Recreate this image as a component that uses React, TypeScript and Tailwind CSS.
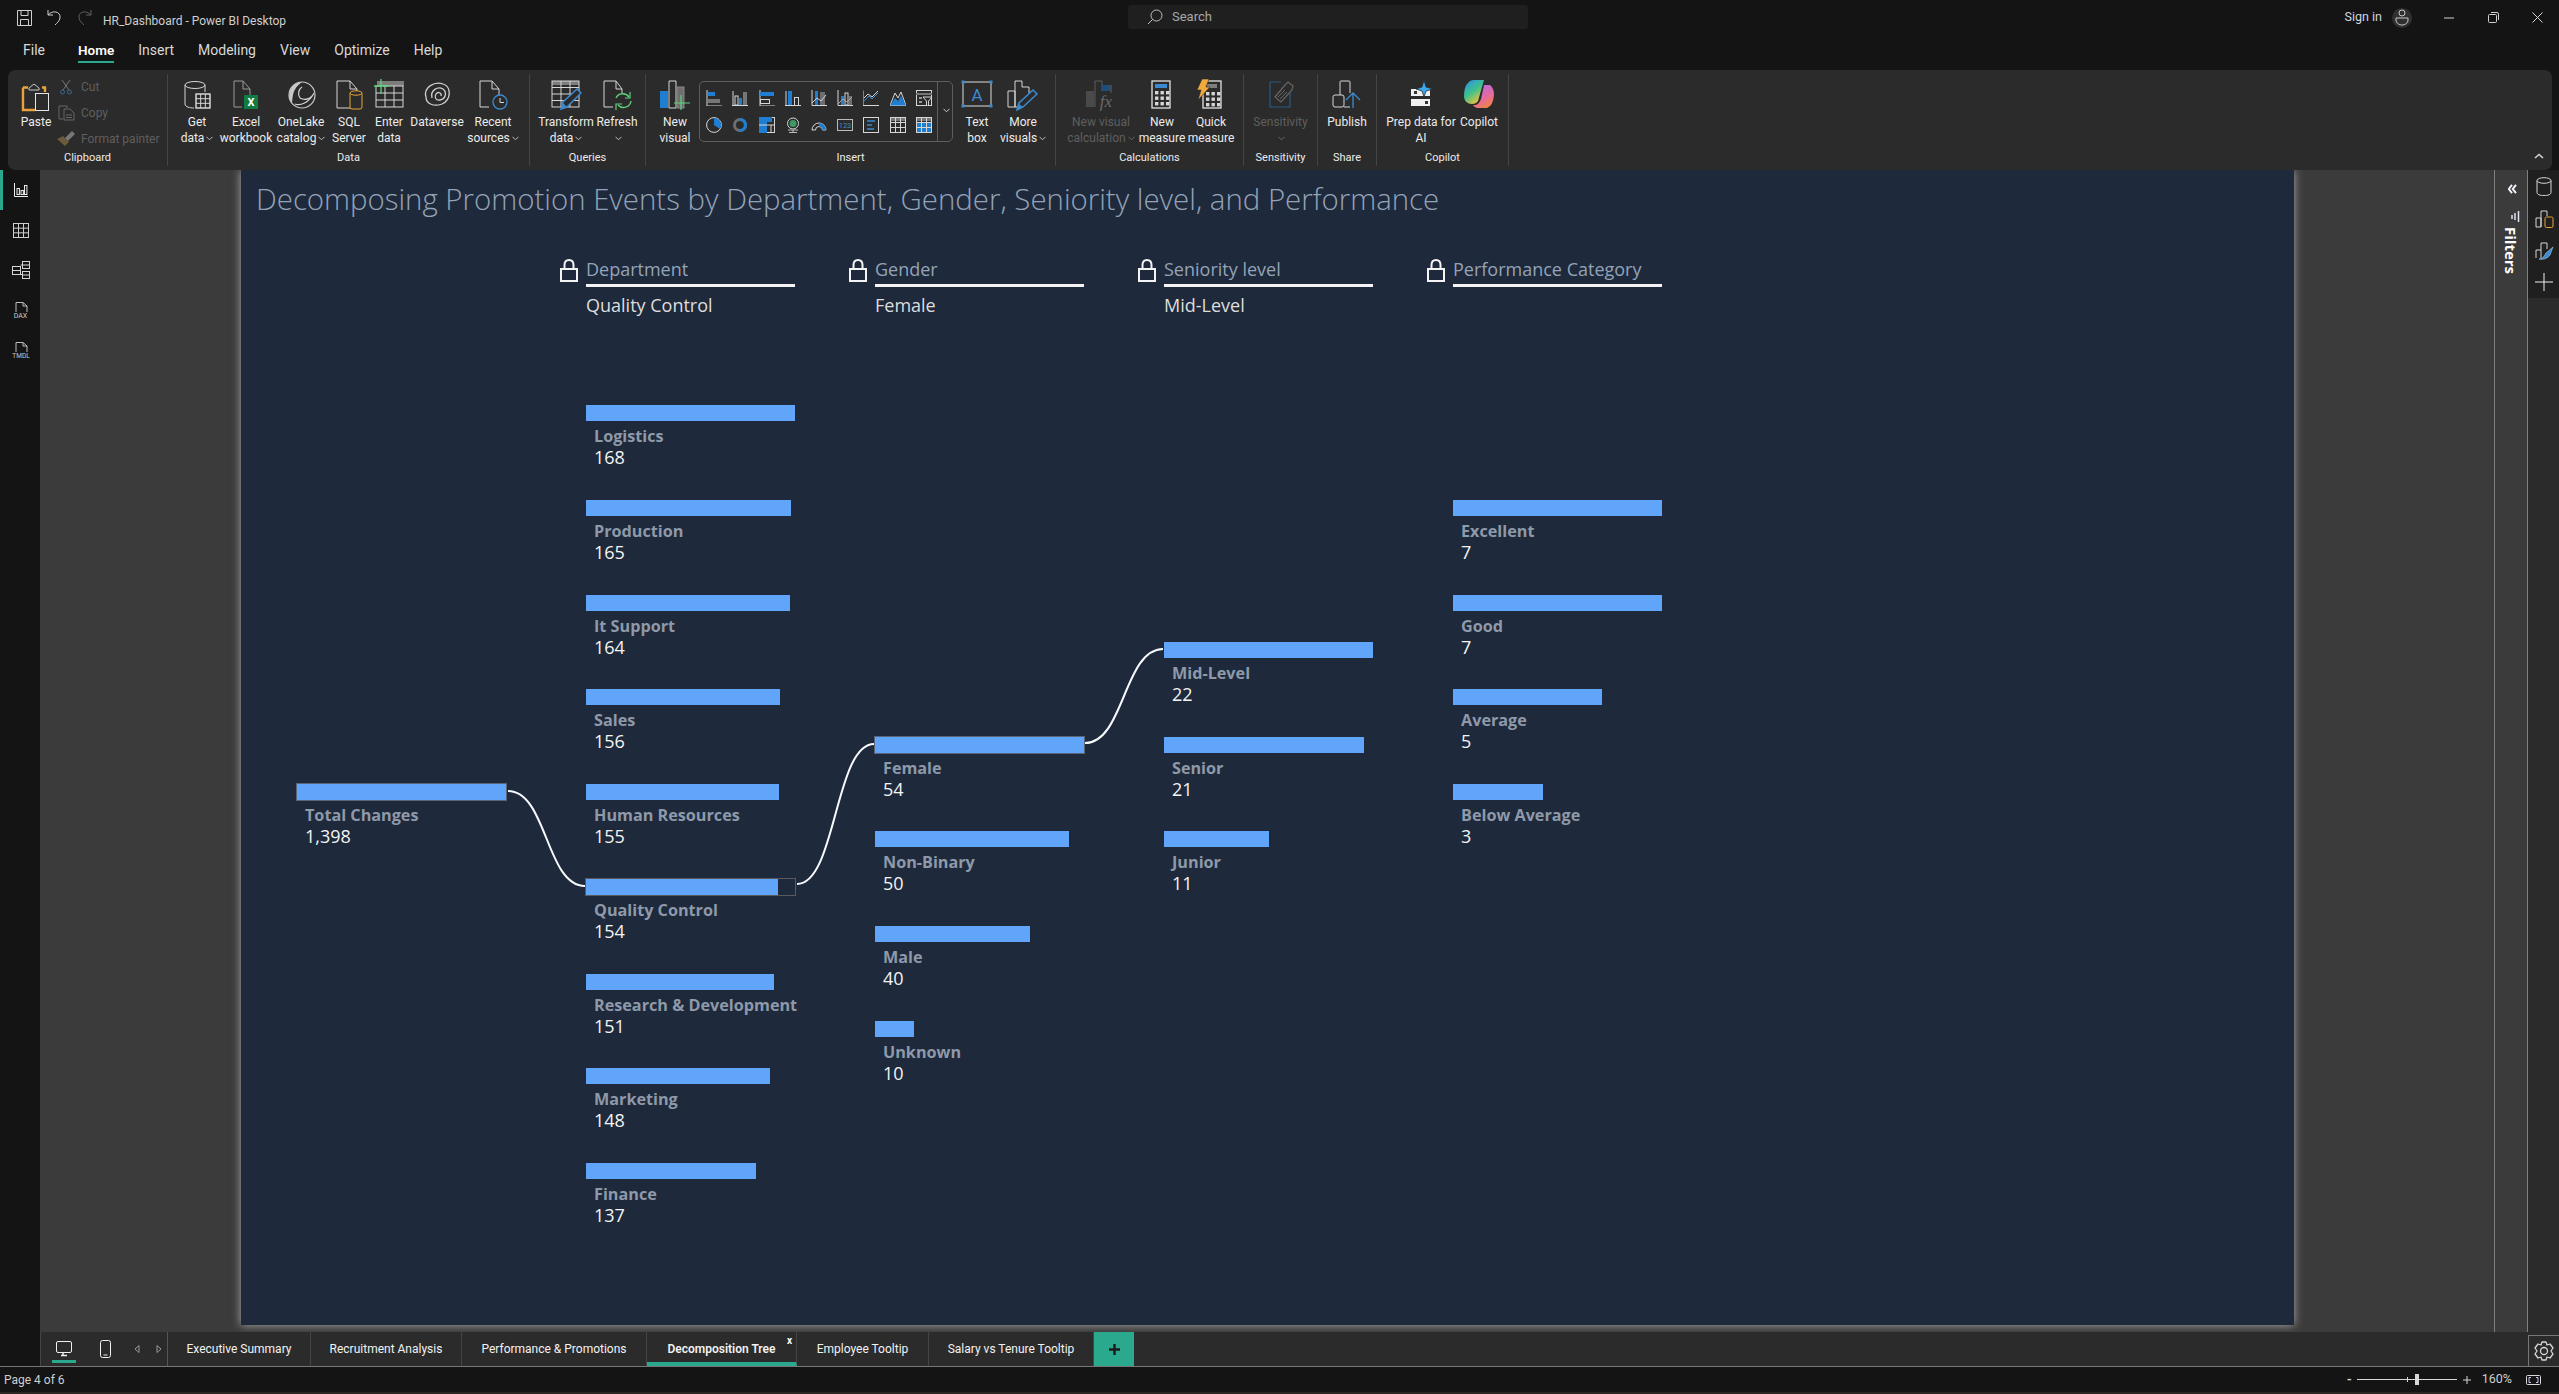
import React from 'react';

const S = '#d6d6d6';
const B = '#3b8ad0';
const DIS = '#5c5c5c';

function Ic({ w = 32, h = 32, vb, children, className = '' }: { w?: number; h?: number; vb?: string; children: React.ReactNode; className?: string }) {
  return (
    <svg width={w} height={h} viewBox={vb ?? `0 0 ${w} ${h}`} fill="none" stroke={S} strokeWidth={1} className={`block shrink-0 ${className}`}>
      {children}
    </svg>
  );
}

const Chevron = ({ c = '#bdbdbd' }: { c?: string }) => (
  <svg width="7" height="5" viewBox="0 0 7 5" fill="none" stroke={c} strokeWidth="1" className="inline-block ml-[2px] mb-[1px]">
    <path d="M0.5 0.8 L3.5 3.8 L6.5 0.8" />
  </svg>
);

const Doc = ({ x = 8, y = 2, w = 18, h = 26, c = S }: { x?: number; y?: number; w?: number; h?: number; c?: string }) => (
  <path d={`M${x + w} ${y + h} H${x} V${y} H${x + w - 7} L${x + w} ${y + 8} V${y + h} M${x + w - 7} ${y} V${y + 8} H${x + w}`} stroke={c} />
);

const GridLines = ({ x, y, w, h, cols, rows, c = S }: { x: number; y: number; w: number; h: number; cols: number; rows: number; c?: string }) => (
  <g stroke={c}>
    <rect x={x} y={y} width={w} height={h} />
    {Array.from({ length: cols - 1 }, (_, i) => (
      <path key={i} d={`M${x + ((i + 1) * w) / cols} ${y} V${y + h}`} />
    ))}
    {Array.from({ length: rows - 1 }, (_, i) => (
      <path key={i} d={`M${x} ${y + ((i + 1) * h) / rows} H${x + w}`} />
    ))}
  </g>
);

const PasteIcon = () => (
  <Ic w={30} h={32}>
    <path d="M2 6.5 V29 H14" stroke="#e8a33d" strokeWidth="2.4" />
    <path d="M2 6.5 H7 M21 6.5 H24 V11" stroke="#e8a33d" strokeWidth="2.4" />
    <path d="M8 7 L13 3 L18 7 V9 H8 Z" stroke="#c9c9c9" />
    <rect x="14.5" y="12.5" width="13" height="17" fill="#2b2b2b" stroke="#e6e6e6" />
  </Ic>
);
const GetDataIcon = () => (
  <Ic>
    <ellipse cx="14" cy="6" rx="10" ry="3.5" />
    <path d="M4 6 V25 C4 28 9 29 13 29 M24 6 V13" />
    <rect x="15" y="15" width="14" height="14" fill="#2b2b2b" />
    <GridLines x={15} y={15} w={14} h={14} cols={3} rows={3} />
  </Ic>
);
const ExcelIcon = () => (
  <Ic>
    <path d="M20 21 V10 L13 2 H4 V28 H12 M13 2 V10 H20" stroke="#9a9a9a" />
    <rect x="14" y="16" width="14" height="14" fill="#107c41" stroke="none" />
    <text x="21" y="27" fontSize="11" fontWeight="700" fill="#fff" stroke="none" textAnchor="middle" fontFamily="Roboto, sans-serif">X</text>
  </Ic>
);
const OneLakeIcon = () => (
  <Ic>
    <circle cx="17" cy="16" r="13" fill="#2b2b2b" stroke="#c8c8c8" strokeWidth="1.2" />
    <path d="M17 3 A13 13 0 0 0 7 24 C8 17 7 10 17 3 Z" fill="#c8c8c8" stroke="none" />
    <path d="M10 25 C15 27 24 24 29 14 C26 20 20 22 15 19 C12 15 14 10 17 8" stroke="#d2d2d2" strokeWidth="1.2" />
  </Ic>
);
const SqlIcon = () => (
  <Ic>
    <Doc x={4} y={2} w={20} h={27} />
    <rect x="17" y="13" width="12" height="17" rx="2" fill="#2b2b2b" stroke="#e8a33d" />
    <ellipse cx="23" cy="14" rx="6" ry="2.2" fill="#2b2b2b" stroke="#e8a33d" />
  </Ic>
);
const EnterIcon = () => (
  <Ic>
    <rect x="4" y="2" width="27" height="5" fill="#7d7d7d" stroke="none" />
    <GridLines x={3} y={7} w={27} h={21} cols={3} rows={3} />
    <path d="M1 7 H16 M8 0 V15" stroke="#5fd17a" strokeWidth="1.3" />
  </Ic>
);
const DataverseIcon = () => (
  <Ic>
    <path d="M5 18 C2 8 14 2 22 5 C31 8 30 21 21 25 C13 28 5 25 5 18 Z" stroke="#cfcfcf" strokeWidth="1.3" />
    <path d="M11 19 C9 11 17 7 22 10 C26 13 25 20 19 21 C15 22 13 18 15 15 C17 12 21 14 20 17" stroke="#cfcfcf" strokeWidth="1.3" />
  </Ic>
);
const RecentIcon = () => (
  <Ic>
    <path d="M12 28 H3 V2 H15 L22 10 V17 M15 2 V10 H22" />
    <circle cx="23" cy="23" r="7" fill="#2b2b2b" stroke={B} strokeWidth="1.3" />
    <path d="M23 19 V23.5 H27" stroke="#d6d6d6" />
  </Ic>
);
const TransformIcon = () => (
  <Ic>
    <rect x="2" y="2" width="27" height="4" fill="#7d7d7d" stroke="none" />
    <GridLines x={2} y={2} w={27} h={26} cols={3} rows={4} />
    <path d="M11 30 L13 23 L27 10 L31 14 L17 28 Z" fill="#2b2b2b" stroke={B} strokeWidth="1.5" />
    <path d="M11 30 L13 24 L17 28 Z" fill={B} stroke="none" />
  </Ic>
);
const RefreshIcon = () => (
  <Ic>
    <path d="M12 28 H3 V2 H15 L21 10 V14 M15 2 V10 H21" />
    <path d="M15 19 A7.5 7.5 0 0 1 28 18 M30 22 A7.5 7.5 0 0 1 17 26" stroke="#5fd17a" strokeWidth="1.4" />
    <path d="M29 13 V19 H24 M15 31 V25 H21" stroke="#5fd17a" strokeWidth="1.2" />
  </Ic>
);
const NewVisualIcon = () => (
  <Ic>
    <rect x="1" y="12" width="8" height="17" fill="#1f7ed0" stroke="none" />
    <path d="M10 29 V2 H17 V29 M10 29 H17" />
    <rect x="18" y="8" width="7" height="21" fill="#6e6e6e" stroke="#888" />
    <path d="M15 24 H31 M22 16 V31" stroke="#5fd17a" strokeWidth="1.2" />
  </Ic>
);
const TextBoxIcon = () => (
  <Ic>
    <rect x="2" y="3" width="28" height="24" stroke="#dcdcdc" />
    {[[2, 3], [30, 3], [2, 27], [30, 27]].map(([x, y], i) => (
      <rect key={i} x={x - 1.5} y={y - 1.5} width="3" height="3" fill={B} stroke="none" />
    ))}
    <text x="16" y="22" textAnchor="middle" fontSize="17" fill={B} stroke="none" fontFamily="Roboto, sans-serif">A</text>
  </Ic>
);
const MoreVisualsIcon = () => (
  <Ic>
    <path d="M1 28 V12 H8 V28 Z M8 28 V2 H15 V8 H22 V14 M8 28 H14" />
    <path d="M10 31 L12 24 L26 11 L30 15 L16 28 Z" fill="#2b2b2b" stroke={B} strokeWidth="1.5" />
    <path d="M10 31 L12 25 L16 28 Z" fill={B} stroke="none" />
  </Ic>
);
const FxIcon = () => (
  <Ic>
    <rect x="1" y="12" width="8" height="16" fill="#4a4a4a" stroke="none" />
    <path d="M10 28 V2 H17 V12" stroke={DIS} />
    <rect x="17" y="6" width="9" height="6" fill="#1e4d78" stroke="none" />
    <path d="M26 6 V14" stroke={DIS} />
    <text x="21" y="28" textAnchor="middle" fontSize="17" fontStyle="italic" fontFamily="Liberation Serif, serif" fill="#6a6a6a" stroke="none">fx</text>
  </Ic>
);
const CalcKeys = ({ x, y, c = '#d6d6d6' }: { x: number; y: number; c?: string }) => (
  <g fill={c} stroke="none">
    {[0, 1, 2].map((r) => [0, 1, 2].map((k) => <rect key={`${r}${k}`} x={x + k * 5.5} y={y + r * 5.5} width="3.4" height="3.4" />))}
  </g>
);
const MeasureIcon = () => (
  <Ic>
    <rect x="6" y="2" width="18" height="27" stroke="#e2e2e2" strokeWidth="1.3" />
    <rect x="9" y="5" width="12" height="4" fill={B} stroke="none" />
    <CalcKeys x={9} y={12} />
  </Ic>
);
const QuickIcon = () => (
  <Ic>
    <rect x="8" y="2" width="18" height="27" stroke="#e2e2e2" strokeWidth="1.3" />
    <rect x="12" y="5" width="10" height="4" fill="#7d7d7d" stroke="none" />
    <CalcKeys x={11} y={13} />
    <path d="M7 0 H14 L11 8 H15 L3 21 L6 11 H2 Z" fill="#f2a93b" stroke="#2b2b2b" strokeWidth="0.6" />
  </Ic>
);
const SensitivityIcon = () => (
  <Ic>
    <path d="M5 3 H16 M25 14 V28 H5 V3" stroke="#2a5a82" strokeWidth="1.2" />
    <path d="M10 18 L20 6 L23 3 L28 7 L27 11 L16 23 Z" fill="#2b2b2b" stroke="#666" strokeWidth="1.2" />
    <path d="M13 18 L20 11 M15 20 L22 13" stroke="#666" />
  </Ic>
);
const PublishIcon = () => (
  <Ic>
    <rect x="2" y="16" width="11" height="12" rx="2" />
    <path d="M9 16 V3 Q9 2 10 2 H18 Q19 2 19 3 V14 M13 28 H19" />
    <path d="M22 29 V14 M15 21 L22 14 L29 21" stroke={B} strokeWidth="1.3" />
  </Ic>
);
const PrepIcon = () => (
  <Ic w={26} h={32} vb="0 0 26 32">
    <rect x="3" y="10" width="19" height="7" fill="#f0f0f0" stroke="none" />
    <rect x="6" y="12" width="3" height="3" fill="#333" stroke="none" />
    <rect x="3" y="20" width="19" height="7" fill="#f0f0f0" stroke="none" />
    <rect x="17" y="22" width="3" height="3" fill="#333" stroke="none" />
    <path d="M16 1 L18 8 L25 10 L18 12 L16 18 L14 12 L8 10 L14 8 Z" fill="#3aa8f0" stroke="#2b2b2b" strokeWidth="0.8" />
  </Ic>
);
const CopilotIcon = () => (
  <Ic>
    <defs>
      <linearGradient id="cpA" x1="0" y1="0" x2="0.6" y2="1">
        <stop offset="0" stopColor="#2c8cf0" />
        <stop offset="0.55" stopColor="#3fc28a" />
        <stop offset="1" stopColor="#f2c23c" />
      </linearGradient>
      <linearGradient id="cpB" x1="0.2" y1="0" x2="0.7" y2="1">
        <stop offset="0" stopColor="#b06ce8" />
        <stop offset="0.6" stopColor="#e86a9a" />
        <stop offset="1" stopColor="#f0853a" />
      </linearGradient>
    </defs>
    <path d="M11 1 H21 L15 22 Q13 25 9 25 Q2 25 1 18 Q1 7 5 4 Q7 1 11 1 Z" fill="url(#cpA)" stroke="none" />
    <path d="M21 6 H27 Q31 9 31 16 Q30 27 24 29 H14 Q11 28 10 26 H13 Q16 25 18 20 Z" fill="url(#cpB)" stroke="none" />
  </Ic>
);

/* gallery icons */
const G = ({ children }: { children: React.ReactNode }) => <Ic w={16} h={16}>{children}</Ic>;
const gallery: React.ReactNode[] = [
  <G><path d="M1 0 V16 H16" /><rect x="2" y="2" width="7" height="4" fill="#1f7ed0" stroke="none" /><rect x="2" y="9" width="12" height="4" fill="#777" stroke="none" /></G>,
  <G><path d="M0 15.5 H16 M1 1 V15" /><rect x="3" y="6" width="3" height="9" stroke="#d6d6d6" /><rect x="7" y="8" width="3" height="7" fill="#1f7ed0" stroke="none" /><rect x="11" y="2" width="4" height="13" fill="#777" stroke="none" /></G>,
  <G><path d="M1 0 V16 H16" /><rect x="1" y="2" width="14" height="4" fill="#1f7ed0" stroke="none" /><rect x="1.5" y="9.5" width="9" height="4" /></G>,
  <G><path d="M0 15.5 H16 M1 1 V15" /><rect x="3" y="1" width="4" height="14" fill="#1f7ed0" stroke="none" /><rect x="9.5" y="7.5" width="4" height="8" /></G>,
  <G><path d="M1 0 V15.5 H16" /><rect x="4" y="1" width="3" height="14" fill="#1f7ed0" stroke="none" /><rect x="9" y="2" width="5" height="13" fill="#6e6e6e" stroke="none" /><path d="M1 13 L6 8 L10 11 L15 5" /></G>,
  <G><path d="M1 0 V15.5 H16" /><rect x="4" y="6" width="3" height="9" fill="#1f7ed0" stroke="none" /><rect x="8" y="3" width="3" height="12" stroke="#d6d6d6" /><rect x="12" y="6" width="3" height="9" fill="#6e6e6e" stroke="none" /><path d="M1 14 L6 9 L10 12 L15 7" stroke="#aaa" /></G>,
  <G><path d="M0 0.5 V15.5 H16" /><path d="M1 11 L6 6 L9 9 L15 3" stroke={B} /><path d="M1 8 L5 4 L9 7 L15 1" /></G>,
  <G><path d="M0 15.5 L5 3 L8 8 L11 2 L16 15.5 Z" /><path d="M0 15.5 L5 8 L8 11 L11 6 L16 15.5 Z" fill="#1f7ed0" stroke="none" /></G>,
  <G><rect x="0.5" y="0.5" width="15" height="15" /><path d="M0 4 H16" strokeWidth="2" stroke="#777" /><rect x="3" y="7" width="3" height="2" fill="#999" stroke="none" /><rect x="3" y="11" width="3" height="2" fill="#999" stroke="none" /><path d="M7 7 H16 L12.5 11 V16 H10.5 V11 Z" fill="#2b2b2b" /></G>,
  <G><circle cx="8" cy="8" r="7.4" /><path d="M8 1 A7 7 0 0 1 14 12 L8 8 Z" fill="#1f7ed0" stroke="none" /></G>,
  <G><circle cx="8" cy="8" r="5.5" stroke="#6e6e6e" strokeWidth="3" /><path d="M8 2.5 A5.5 5.5 0 0 1 8 13.5" stroke="#1f7ed0" strokeWidth="3.2" /></G>,
  <G><rect x="0.5" y="0.5" width="15" height="15" /><rect x="0" y="0" width="8" height="16" fill="#1f7ed0" stroke="none" /><rect x="8" y="0" width="5" height="5" fill="#1f7ed0" stroke="none" /><path d="M8 8 H16 M12 8 V16 M0 8 H8" stroke="#d6d6d6" /></G>,
  <G><circle cx="8" cy="6.5" r="5.5" /><circle cx="8" cy="6.5" r="3.5" fill="#3c9a64" stroke="none" /><path d="M3 13 H13 M8 13 V15.5 M4 15.5 H12" stroke="#bbb" /></G>,
  <G><path d="M1 13 A7 7 0 0 1 15 13 H11.5 A3.5 3.5 0 0 0 4.5 13 Z" /><path d="M8 6 A7 7 0 0 1 15 13 H11.5 A3.5 3.5 0 0 0 8 9.5 Z" fill="#1f7ed0" stroke="none" /></G>,
  <G><rect x="0.5" y="2.5" width="15" height="11" stroke="#bbb" /><text x="8" y="11" fontSize="7.5" textAnchor="middle" fill="#3b8ad0" stroke="none" fontFamily="Roboto, sans-serif">123</text></G>,
  <G><rect x="0.5" y="0.5" width="15" height="15" /><path d="M4 4 H12 M4 8 H9 M4 12 H11" stroke="#3b8ad0" strokeWidth="1.6" /></G>,
  <G><rect x="0" y="0" width="16" height="4" fill="#777" stroke="none" /><GridLines x={0.5} y={0.5} w={15} h={15} cols={3} rows={3} /></G>,
  <G><rect x="0" y="0" width="16" height="4" fill="#777" stroke="none" /><rect x="0" y="5" width="16" height="11" fill="#1f7ed0" stroke="none" /><GridLines x={0.5} y={0.5} w={15} h={15} cols={3} rows={3} c="#d6d6d6" /></G>,
];

function RBtn({ w, icon, lines, chev, dim }: { w: number; icon: React.ReactNode; lines: string[]; chev?: boolean; dim?: boolean }) {
  return (
    <div className={`flex flex-col items-center shrink-0 ${dim ? 'text-[#5f5f5f]' : 'text-[#ececec]'}`} style={{ width: w }}>
      <div className="h-8 flex justify-center">{icon}</div>
      <div className="mt-[3px] flex flex-col items-center text-[12px] leading-4 whitespace-nowrap">
        <span>{lines[0]}</span>
        <span className="h-4">
          {lines[1]}
          {chev && <Chevron c={dim ? '#6a6a6a' : '#bdbdbd'} />}
        </span>
      </div>
    </div>
  );
}

function Group({ w, pl = 0, label, center, children }: { w: number; pl?: number; label: string; center?: boolean; children: React.ReactNode }) {
  return (
    <div className="my-1 flex flex-col border-r border-[#444] shrink-0" style={{ width: w }}>
      <div className={`h-[73px] pt-[5px] flex ${center ? 'justify-center' : ''}`} style={{ paddingLeft: pl }}>
        {children}
      </div>
      <div className="text-center text-[11px] leading-4 text-[#ececec] mt-[3px]">{label}</div>
    </div>
  );
}

function Ribbon() {
  return (
    <div className="h-[100px] ml-2 mr-[7px] bg-[#2b2b2b] rounded-[7px] flex relative">
      <Group w={160} label="Clipboard">
        <div className="flex">
          <div className="w-[50px] flex flex-col items-center text-[12px] text-[#ececec] pl-[6px]">
            <div className="h-8 pt-[2px]"><PasteIcon /></div>
            <div className="leading-4 mt-[3px]">Paste</div>
          </div>
          <div className="flex flex-col text-[12px] text-[#5f5f5f] -mt-[5px]">
            <div className="h-[26px] shrink-0 flex items-center gap-[9px] pl-[2px]">
              <svg width="12" height="15" viewBox="0 0 12 15" fill="none" stroke="#777" className="shrink-0"><path d="M2 0 L9 10 M10 0 L3 10" /><circle cx="2.5" cy="12" r="2" stroke="#3b6a92" /><circle cx="9.5" cy="12" r="2" stroke="#3b6a92" /></svg>
              <span>Cut</span>
            </div>
            <div className="h-[26px] shrink-0 flex items-center gap-[6px]">
              <svg width="17" height="16" viewBox="0 0 17 16" fill="none" stroke="#666" className="shrink-0"><path d="M5 14 H1 V1 H9 V3" /><path d="M6 4 H12 L16 8 V15 H6 Z" /><path d="M8 10 H14 M8 12.5 H14" /></svg>
              <span>Copy</span>
            </div>
            <div className="h-[26px] shrink-0 flex items-center gap-[6px] -ml-[1px]">
              <svg width="18" height="16" viewBox="0 0 18 16" className="shrink-0"><path d="M0 8 L8 15 L12 11 L6 5 Z" fill="#6b5a3c" /><path d="M8 7 L15 0 L18 3 L11 10 Z" fill="#777" /></svg>
              <span className="whitespace-nowrap">Format painter</span>
            </div>
          </div>
        </div>
      </Group>
      <Group w={362} pl={4} label="Data">
        <RBtn w={50} icon={<GetDataIcon />} lines={['Get', 'data']} chev />
        <RBtn w={48} icon={<ExcelIcon />} lines={['Excel', 'workbook']} />
        <RBtn w={62} icon={<OneLakeIcon />} lines={['OneLake', 'catalog']} chev />
        <RBtn w={34} icon={<SqlIcon />} lines={['SQL', 'Server']} />
        <RBtn w={46} icon={<EnterIcon />} lines={['Enter', 'data']} />
        <RBtn w={50} icon={<DataverseIcon />} lines={['Dataverse', '']} />
        <RBtn w={62} icon={<RecentIcon />} lines={['Recent', 'sources']} chev />
      </Group>
      <Group w={116} pl={10} label="Queries">
        <RBtn w={52} icon={<TransformIcon />} lines={['Transform', 'data']} chev />
        <RBtn w={50} icon={<RefreshIcon />} lines={['Refresh', '']} chev />
      </Group>
      <Group w={410} pl={6} label="Insert">
        <RBtn w={46} icon={<NewVisualIcon />} lines={['New', 'visual']} />
        <div className="w-[254px] h-[61px] ml-[1px] mt-[2px] flex border border-[#5e5e5e] rounded-[5px] shrink-0">
          <div className="w-[237px] grid grid-cols-9 grid-rows-2 pl-[1px] py-[2px]">
            {gallery.map((g, i) => (
              <div key={i} className="flex items-center justify-center">{g}</div>
            ))}
          </div>
          <div className="flex-1 border-l border-[#5e5e5e] flex items-center justify-center pb-[1px]">
            <Chevron c="#cfcfcf" />
          </div>
        </div>
        <RBtn w={48} icon={<TextBoxIcon />} lines={['Text', 'box']} />
        <RBtn w={44} icon={<MoreVisualsIcon />} lines={['More', 'visuals']} chev />
      </Group>
      <Group w={188} pl={10} label="Calculations">
        <RBtn w={70} icon={<FxIcon />} lines={['New visual', 'calculation']} chev dim />
        <RBtn w={52} icon={<MeasureIcon />} lines={['New', 'measure']} />
        <RBtn w={46} icon={<QuickIcon />} lines={['Quick', 'measure']} />
      </Group>
      <Group w={74} center label="Sensitivity">
        <RBtn w={60} icon={<SensitivityIcon />} lines={['Sensitivity', '']} chev dim />
      </Group>
      <Group w={59} center label="Share">
        <RBtn w={50} icon={<PublishIcon />} lines={['Publish', '']} />
      </Group>
      <Group w={132} pl={8} label="Copilot">
        <RBtn w={72} icon={<PrepIcon />} lines={['Prep data for', 'AI']} />
        <RBtn w={44} icon={<CopilotIcon />} lines={['Copilot', '']} />
      </Group>
      <svg width="10" height="6" viewBox="0 0 10 6" fill="none" stroke="#cfcfcf" strokeWidth="1.6" className="absolute right-[8px] bottom-[11px]"><path d="M1 5 L5 1.5 L9 5" /></svg>
    </div>
  );
}

function TitleBar() {
  return (
    <div className="h-[35px] flex items-center relative">
      <div className="flex items-center pl-[17px] gap-[15px]">
        <svg width="15" height="16" viewBox="0 0 15 16" fill="none" stroke="#d0d0d0"><path d="M0.5 0.5 H14.5 V15.5 H0.5 Z M4 0.5 V5.5 H11 V0.5 M3.5 15.5 V9.5 H11.5 V15.5" /></svg>
        <svg width="15" height="17" viewBox="0 0 15 17" fill="none" stroke="#d0d0d0"><path d="M1 1 V6 H6 M1 6 C5 1 14 2 13 9 C12.5 12 10 14 8 16" /></svg>
        <svg width="15" height="17" viewBox="0 0 15 17" fill="none" stroke="#606060"><path d="M14 1 V6 H9 M14 6 C10 1 1 2 2 9 C2.5 12 5 14 7 16" /></svg>
      </div>
      <span className="ml-[11px] mt-[7px] text-[12px] text-[#cfcfcf] whitespace-nowrap">HR_Dashboard - Power BI Desktop</span>
      <div className="absolute left-[1128px] top-[5px] w-[400px] h-[24px] bg-[#1f1f1f] rounded-[3px] flex items-center pl-[19px] gap-[9px] text-[13px] text-[#a8a8a8]">
        <svg width="16" height="16" viewBox="0 0 16 16" fill="none" stroke="#c0c0c0"><circle cx="9.5" cy="6.5" r="5.5" /><path d="M5.5 10.5 L1 15" /></svg>
        <span>Search</span>
      </div>
      <div className="ml-auto flex items-center">
        <span className="text-[12.5px] text-[#cfd8e0]">Sign in</span>
        <div className="ml-[10px] w-5 h-5 rounded-full bg-[#303030] flex items-center justify-center">
          <svg width="14" height="17" viewBox="0 0 14 17" fill="none" stroke="#c8c8c8"><circle cx="7" cy="4" r="3" /><path d="M1 9 H13 V11 C13 14 10 16 7 16 C4 16 1 14 1 11 Z" /></svg>
        </div>
        <svg width="10" height="2" viewBox="0 0 10 2" stroke="#d0d0d0" className="ml-[32px]"><path d="M0 1 H10" /></svg>
        <svg width="11" height="11" viewBox="0 0 11 11" fill="none" stroke="#d0d0d0" className="ml-[34px]"><rect x="0.5" y="2.5" width="8" height="8" rx="1" /><path d="M3 0.5 H9 Q10.5 0.5 10.5 2 V8" /></svg>
        <svg width="11" height="11" viewBox="0 0 11 11" fill="none" stroke="#d8d8d8" className="ml-[33px] mr-[16px]"><path d="M0.5 0.5 L10.5 10.5 M10.5 0.5 L0.5 10.5" /></svg>
      </div>
    </div>
  );
}

function Menu() {
  return (
    <div className="h-[35px] flex items-start text-[14px] text-[#d8d8d8] pl-[23px]">
      <span className="mt-[6px] leading-[18px]">File</span>
      <div className="ml-[33px] h-[28px] pt-[6px] border-b-2 border-[#2aa98f] font-semibold text-white leading-[18px] text-[13.5px]">Home</div>
      <div className="ml-[24px] mt-[6px] flex gap-[24px] leading-[18px]">
        <span>Insert</span><span>Modeling</span><span>View</span><span>Optimize</span><span>Help</span>
      </div>
    </div>
  );
}

function LeftRail() {
  return (
    <div className="w-10 shrink-0 bg-[#141414] flex flex-col relative">
      <div className="absolute left-0 top-0 w-[3px] h-10 bg-[#2aa98f]" />
      {[
        <Ic w={14} h={14}><path d="M0.5 0 V13.5 H14" stroke="#eee" /><rect x="3" y="5.5" width="2.4" height="6" stroke="#eee" /><rect x="7" y="7.5" width="2.4" height="4" stroke="#eee" /><rect x="10.5" y="2.5" width="2.4" height="9" stroke="#eee" /></Ic>,
        <Ic w={16} h={15}><GridLines x={0.5} y={0.5} w={15} h={14} cols={3} rows={3} c="#cfcfcf" /></Ic>,
        <Ic w={18} h={18}><rect x="0.5" y="5.5" width="8" height="8" /><path d="M0.5 9.5 H8.5" /><rect x="10.5" y="0.5" width="7" height="7" /><path d="M10.5 4 H17.5" /><rect x="10.5" y="10.5" width="7" height="7" /><path d="M10.5 14 H17.5 M8.5 4 H10.5 M8.5 13.5 H10.5" /></Ic>,
        <Ic w={18} h={17}><path d="M4 10 V0.5 H11 L15 4 V10 M11 0.5 V4 H15" stroke="#bbb" /><text x="8.5" y="16" fontSize="7" textAnchor="middle" fill="#ccc" stroke="none" fontFamily="Roboto, sans-serif">DAX</text></Ic>,
        <Ic w={18} h={17}><path d="M4 10 V0.5 H11 L15 4 V10 M11 0.5 V4 H15" stroke="#bbb" /><text x="9" y="16" fontSize="6.5" textAnchor="middle" fill="#ccc" stroke="none" fontFamily="Roboto, sans-serif">TMDL</text></Ic>,
      ].map((ic, i) => (
        <div key={i} className="h-10 flex items-center justify-center pl-[2px]">{ic}</div>
      ))}
    </div>
  );
}

type NodeData = { label: string; value: number; selected?: boolean; path?: boolean };
type ColData = { title?: string; pick?: string; offset: number; max: number; nodes: NodeData[] };

const ROW = 94.75;
const columns: ColData[] = [
  { offset: 4, max: 1398, nodes: [{ label: 'Total Changes', value: 1398, path: true }] },
  {
    title: 'Department', pick: 'Quality Control', offset: 0, max: 168,
    nodes: [
      { label: 'Logistics', value: 168 }, { label: 'Production', value: 165 }, { label: 'It Support', value: 164 },
      { label: 'Sales', value: 156 }, { label: 'Human Resources', value: 155 }, { label: 'Quality Control', value: 154, selected: true },
      { label: 'Research & Development', value: 151 }, { label: 'Marketing', value: 148 }, { label: 'Finance', value: 137 },
    ],
  },
  {
    title: 'Gender', pick: 'Female', offset: 3.5, max: 54,
    nodes: [{ label: 'Female', value: 54, path: true }, { label: 'Non-Binary', value: 50 }, { label: 'Male', value: 40 }, { label: 'Unknown', value: 10 }],
  },
  {
    title: 'Seniority level', pick: 'Mid-Level', offset: 2.5, max: 22,
    nodes: [{ label: 'Mid-Level', value: 22 }, { label: 'Senior', value: 21 }, { label: 'Junior', value: 11 }],
  },
  {
    title: 'Performance Category', offset: 1, max: 7,
    nodes: [{ label: 'Excellent', value: 7 }, { label: 'Good', value: 7 }, { label: 'Average', value: 5 }, { label: 'Below Average', value: 3 }],
  },
];

const Lock = () => (
  <svg width="18" height="23" viewBox="0 0 18 23" fill="none" stroke="#f4f4f4" strokeWidth="2" className="absolute -left-[26px] top-[5px]">
    <rect x="1" y="10" width="16" height="12" />
    <path d="M4.5 10 V6 C4.5 2.5 6.5 1 9 1 C11.5 1 13.5 2.5 13.5 6 V10" />
  </svg>
);

function Column({ col }: { col: ColData }) {
  return (
    <div className="w-[209px] shrink-0 relative">
      <div className="h-[151px] relative">
        {col.title && (
          <>
            <Lock />
            <div className="h-[33px] pt-[3px] border-b-[3px] border-[#f4f4f4] text-[18px] leading-6 text-[#94a3b8] whitespace-nowrap">{col.title}</div>
            <div className="mt-[6px] text-[18px] leading-6 text-[#dedede] whitespace-nowrap">{col.pick}</div>
          </>
        )}
      </div>
      <div style={{ paddingTop: col.offset * ROW }}>
        {col.nodes.map((n) => (
          <div key={n.label} style={{ height: ROW }}>
            <div className={`h-4 ${n.selected ? 'outline outline-1 outline-[#5a5a5a]' : ''}`}>
              <div
                className={`h-4 bg-[#60a5fa] ${n.path ? 'outline outline-1 outline-[#5a6476]' : ''}`}
                style={{ width: `${(n.value / col.max) * 100}%` }}
              />
            </div>
            <div className="mt-[5px] pl-2 text-[16.2px] leading-5 font-bold text-[#8e99aa] whitespace-nowrap">{n.label}</div>
            <div className="mt-[1px] pl-2 text-[18px] leading-[21px] text-[#f4f4f4]">{n.value.toLocaleString('en-US')}</div>
          </div>
        ))}
      </div>
    </div>
  );
}

function ReportPage() {
  return (
    <div className="w-[2053px] h-[1155px] ml-[201px] bg-[#1e293b] relative shrink-0 shadow-[0_0_9px_rgba(210,210,210,0.75)] font-['Open_Sans']">
      <div className="h-[84px] pl-[15px] pt-[9px] text-[29.4px] leading-10 font-light text-[#94a3b8] whitespace-nowrap">
        Decomposing Promotion Events by Department, Gender, Seniority level, and Performance
      </div>
      <div className="flex gap-[80px] pl-[56px]">
        {columns.map((c, i) => <Column key={i} col={c} />)}
      </div>
      <svg width="2053" height="1155" viewBox="0 0 2053 1155" fill="none" stroke="#f8fafc" strokeWidth="2" className="absolute inset-0 pointer-events-none">
        <path d="M267 621 C306 621 305 716 344 716" />
        <path d="M556 714 C595 714 594 574 633 574" />
        <path d="M844 573 C883 573 883 479 922 479" />
      </svg>
    </div>
  );
}

function FilterPane() {
  return (
    <div className="w-[34px] shrink-0 bg-[#3b3b3b] border-l border-r border-[#7f7f7f] flex flex-col items-center pt-[14px]">
      <svg width="9" height="10" viewBox="0 0 9 10" fill="none" stroke="#f0f4fa" strokeWidth="2" className="ml-[2px]"><path d="M4 0.8 L0.8 5 L4 9.2 M8 0.8 L4.8 5 L8 9.2" /></svg>
      <svg width="9" height="11" viewBox="0 0 9 11" stroke="#dfe6ee" strokeWidth="1.5" className="mt-[17px] ml-[8px]"><path d="M1 4 V8 M4 2 V9 M7.5 0 V11" /></svg>
      <div className="mt-[5px] [writing-mode:vertical-rl] text-[15px] leading-[18px] font-bold text-white font-['Open_Sans']">Filters</div>
    </div>
  );
}

function RightRail() {
  return (
    <div className="w-[31px] shrink-0 bg-[#2b2b2b]">
      <div className="h-[128px] bg-[#1f1f1f] flex flex-col items-center pl-[1px]">
        <div className="h-[32px] flex items-center">
          <Ic w={16} h={19}><ellipse cx="8" cy="3.5" rx="7" ry="2.8" /><path d="M1 3.5 V15.5 C1 17.5 4 18.5 8 18.5 C12 18.5 15 17.5 15 15.5 V3.5" /></Ic>
        </div>
        <div className="h-[32px] flex items-center">
          <Ic w={19} h={19}><path d="M1 18 V9 H6 V18 H1 M6 18 V2 H12 V7 M12 2" /><rect x="10" y="8" width="8" height="10.5" rx="1.5" stroke="#e8a33d" /></Ic>
        </div>
        <div className="h-[32px] flex items-center">
          <Ic w={19} h={19}><path d="M1 17 V9 H6 V17 M6 9 V2 H12 V8" /><path d="M4 18 C8 18 9 15 11 12 L18 6 L15 14 C13 17 9 19 4 18 Z" fill="#3b8ad0" stroke="#a8c8e8" strokeWidth="0.6" /></Ic>
        </div>
        <div className="h-[32px] flex items-center">
          <Ic w={18} h={18}><path d="M0 9 H18 M9 0 V18" stroke="#f0f0f0" /></Ic>
        </div>
      </div>
    </div>
  );
}

function Tabs() {
  const tabs = [
    { t: 'Executive Summary', w: 143 },
    { t: 'Recruitment Analysis', w: 151 },
    { t: 'Performance & Promotions', w: 185 },
    { t: 'Decomposition Tree', w: 150, on: true },
    { t: 'Employee Tooltip', w: 132 },
    { t: 'Salary vs Tenure Tooltip', w: 165 },
  ];
  return (
    <div className="h-[35px] flex bg-[#141414] border-b border-[#777]">
      <div className="w-10 shrink-0 bg-[#141414]" />
      <div className="flex-1 flex bg-[#2b2b2b] border-l border-[#444]">
        <div className="w-[127px] shrink-0 flex items-center relative border-r border-[#555]">
          <svg width="16" height="16" viewBox="0 0 16 16" fill="none" stroke="#f0f0f0" className="ml-[15px]"><rect x="0.5" y="0.5" width="15" height="11" rx="1.5" /><path d="M5 14.5 H11 M7 12 V14" strokeWidth="1.5" /></svg>
          <div className="absolute left-[11px] bottom-[3px] w-6 h-[3px] bg-[#2aa98f]" />
          <svg width="11" height="18" viewBox="0 0 11 18" fill="none" stroke="#f0f0f0" className="ml-[28px]"><rect x="0.5" y="0.5" width="10" height="17" rx="2" /><path d="M3.5 15 H7.5" /></svg>
          <svg width="6" height="8" viewBox="0 0 6 8" fill="none" stroke="#9a9a9a" className="ml-[23px]"><path d="M5 0.5 L1 4 L5 7.5 Z" /></svg>
          <svg width="6" height="8" viewBox="0 0 6 8" fill="none" stroke="#9a9a9a" className="ml-[16px]"><path d="M1 0.5 L5 4 L1 7.5 Z" /></svg>
        </div>
        {tabs.map((t) => (
          <div
            key={t.t}
            className={`shrink-0 flex items-center justify-center relative border-r border-[#444] text-[12px] whitespace-nowrap text-[#f2f2f2] ${t.on ? 'font-semibold border-b-4 border-b-[#2aa98f] pt-[4px]' : ''}`}
            style={{ width: t.w }}
          >
            {t.t}
            {t.on && <span className="absolute right-[4px] top-[3px] text-[10px] leading-3 font-bold text-white">x</span>}
          </div>
        ))}
        <div className="w-10 shrink-0 bg-[#2aa98f] flex items-center justify-center text-[#1e1e1e]">
          <svg width="11" height="11" viewBox="0 0 11 11" stroke="#1a1a1a" strokeWidth="2.4"><path d="M0 5.5 H11 M5.5 0 V11" /></svg>
        </div>
        <div className="ml-auto w-[31px] mt-[3px] border-l border-t border-[#777] flex items-center justify-center">
          <svg width="20" height="20" viewBox="0 0 20 20" fill="none" stroke="#d6d6d6" strokeWidth="1.3"><path d="M8 1 H12 L13 4 L16 3 L19 7 L17 10 L19 13 L16 17 L13 16 L12 19 H8 L7 16 L4 17 L1 13 L3 10 L1 7 L4 3 L7 4 Z" strokeLinejoin="round" /><circle cx="10" cy="10" r="3.5" /></svg>
        </div>
      </div>
    </div>
  );
}

function Status() {
  return (
    <div className="h-[27px] bg-[#141414] border-b-2 border-[#2b2622] flex items-center text-[12px] text-[#cfcfcf]">
      <span className="pl-[4px]">Page 4 of 6</span>
      <div className="ml-auto flex items-center mr-[18px]">
        <span className="text-[13px] font-bold leading-none mr-[3px]">-</span>
        <div className="w-[100px] h-[1px] bg-[#d8d8d8] ml-[2px] relative">
          <div className="absolute left-[50px] -top-[2px] w-[1px] h-[5px] bg-[#d8d8d8]" />
          <div className="absolute left-[58px] -top-[5px] w-1 h-[11px] bg-[#d8d8d8]" />
        </div>
        <svg width="8" height="8" viewBox="0 0 8 8" stroke="#d8d8d8" className="ml-[6px]"><path d="M0 4 H8 M4 0 V8" /></svg>
        <span className="ml-[11px] text-[12.5px]">160%</span>
        <svg width="15" height="10" viewBox="0 0 15 10" fill="none" stroke="#d8d8d8" className="ml-[14px]"><rect x="0.5" y="0.5" width="14" height="9" rx="1" /><path d="M5 2.5 H3 V7.5 H5 M10 2.5 H12 V7.5 H10" stroke="#cfc7ff" /></svg>
      </div>
    </div>
  );
}

export default function App() {
  return (
    <div className="w-[2559px] h-[1394px] overflow-hidden flex flex-col bg-[#141414] font-['Roboto',sans-serif]">
      <TitleBar />
      <Menu />
      <Ribbon />
      <div className="flex-1 flex min-h-0">
        <LeftRail />
        <div className="flex-1 bg-[#3b3b3b] overflow-hidden min-w-0">
          <ReportPage />
        </div>
        <FilterPane />
        <RightRail />
      </div>
      <Tabs />
      <Status />
    </div>
  );
}
